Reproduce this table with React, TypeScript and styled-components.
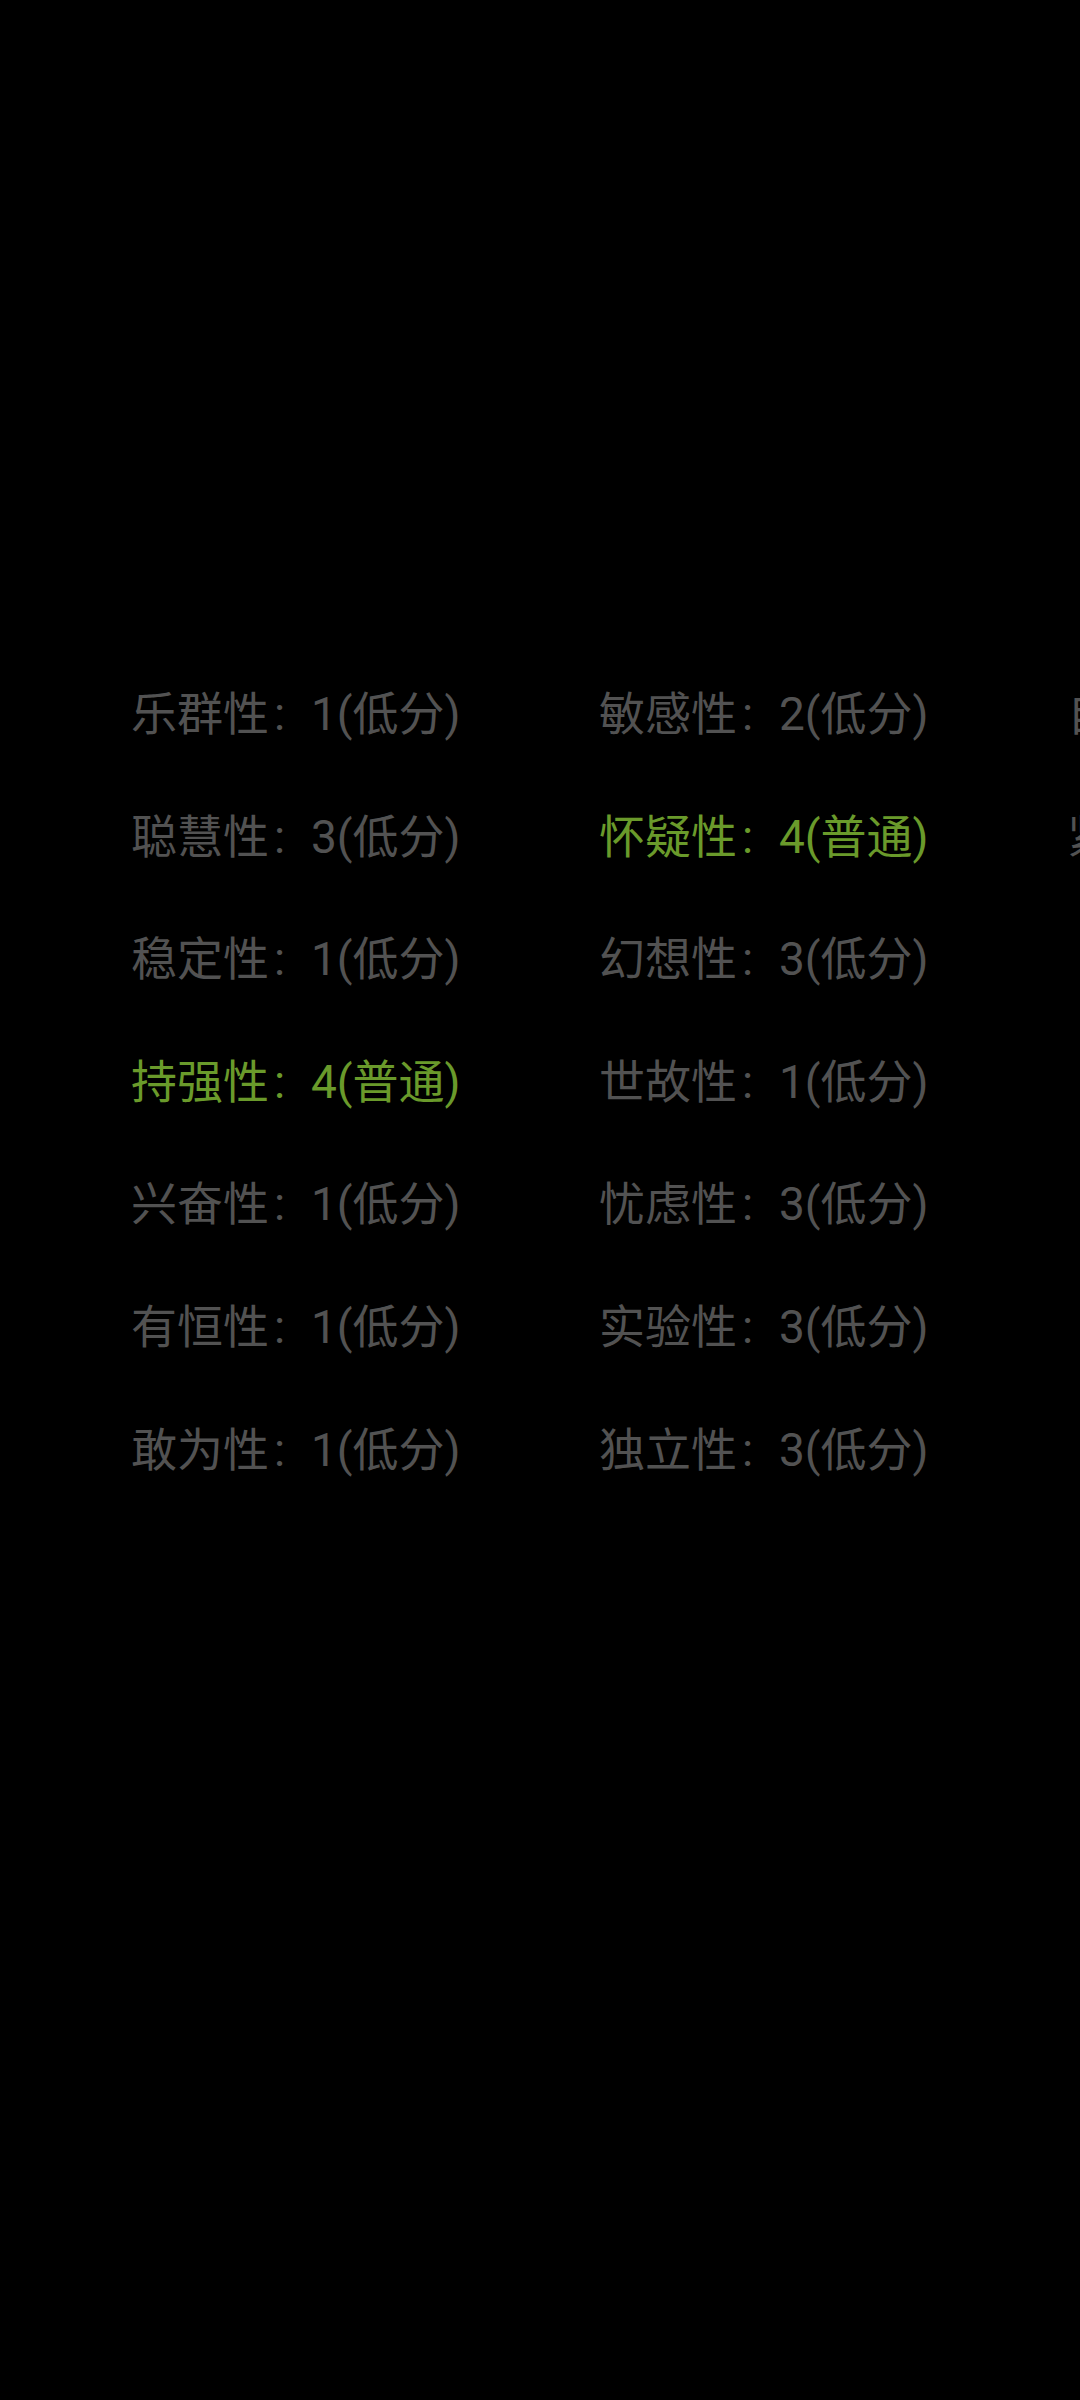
import React from "react";
import styled, { createGlobalStyle } from "styled-components";

const Global = createGlobalStyle`
  html, body {
    margin: 0;
    padding: 0;
    background: #000;
  }
  body {
    width: 1080px;
    height: 2400px;
    overflow: hidden;
  }
`;

const Screen = styled.div`
  width: 1080px;
  height: 2400px;
  background: #000;
  overflow: hidden;
  box-sizing: border-box;
  padding: 681px 0 0 131px;
`;

const Grid = styled.div`
  display: grid;
  grid-template-rows: repeat(7, 58px);
  grid-auto-flow: column;
  grid-auto-columns: 468px;
  row-gap: 64.6px;
  width: max-content;
`;

const Item = styled.div<{ $hi?: boolean }>`
  font-family: Roboto, "Noto Sans CJK SC", sans-serif;
  font-size: 46px;
  line-height: 58px;
  white-space: nowrap;
  color: ${(p) => (p.$hi ? "#6a9a2b" : "#525252")};
`;

const Name = styled.span`
  font-family: "Noto Sans CJK SC", sans-serif;
`;

const Colon = styled.span`
  display: inline-block;
  box-sizing: border-box;
  width: 42px;
  padding-left: 5px;
  font-family: Roboto, sans-serif;
`;

const Value = styled.span`
  font-family: Roboto, "Noto Sans CJK SC", sans-serif;
`;

const items: { name: string; score: number; level: string }[] = [
  { name: "乐群性", score: 1, level: "低分" },
  { name: "聪慧性", score: 3, level: "低分" },
  { name: "稳定性", score: 1, level: "低分" },
  { name: "持强性", score: 4, level: "普通" },
  { name: "兴奋性", score: 1, level: "低分" },
  { name: "有恒性", score: 1, level: "低分" },
  { name: "敢为性", score: 1, level: "低分" },
  { name: "敏感性", score: 2, level: "低分" },
  { name: "怀疑性", score: 4, level: "普通" },
  { name: "幻想性", score: 3, level: "低分" },
  { name: "世故性", score: 1, level: "低分" },
  { name: "忧虑性", score: 3, level: "低分" },
  { name: "实验性", score: 3, level: "低分" },
  { name: "独立性", score: 3, level: "低分" },
  { name: "自律性", score: 2, level: "低分" },
  { name: "紧张性", score: 3, level: "低分" },
];

export default function App() {
  return (
    <>
      <Global />
      <Screen>
        <Grid>
          {items.map((it) => (
            <Item key={it.name} $hi={it.level === "普通"}>
              <Name>{it.name}</Name>
              <Colon>:</Colon>
              <Value>
                {it.score}({it.level})
              </Value>
            </Item>
          ))}
        </Grid>
      </Screen>
    </>
  );
}
